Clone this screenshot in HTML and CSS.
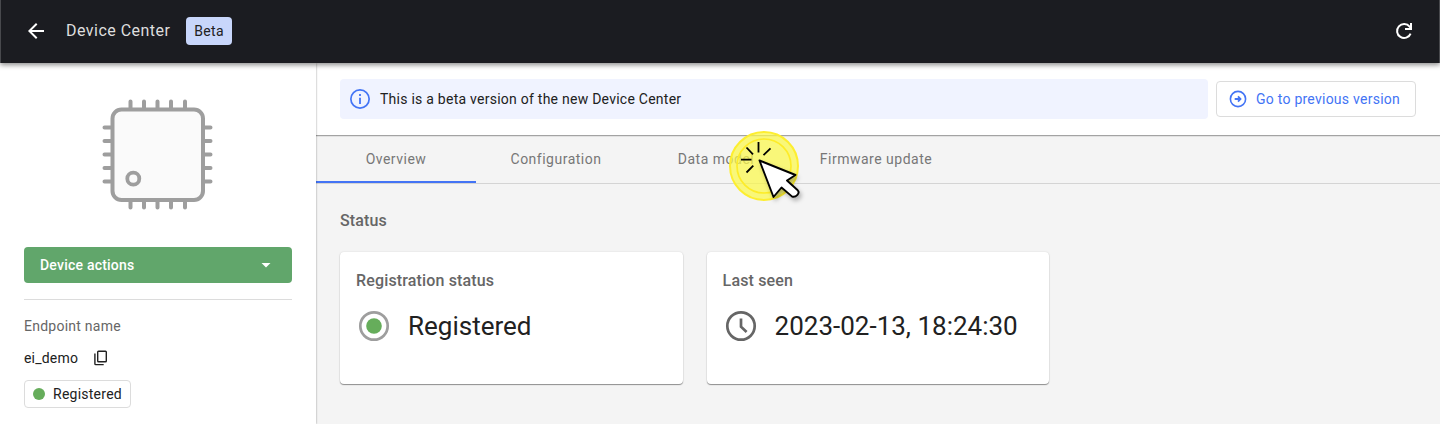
FILE: index.html
```html
<!DOCTYPE html>
<html lang="en">
<head>
<meta charset="utf-8">
<title>Device Center</title>
<link rel="stylesheet" href="styles.css">
</head>
<body>
<header class="topbar">
  <svg class="icon" width="24" height="24" viewBox="0 0 24 24"><path fill="#fff" d="M20 11H7.83l5.59-5.59L12 4l-8 8 8 8 1.41-1.41L7.83 13H20z"/></svg>
  <h1 class="title">Device Center</h1>
  <span class="beta">Beta</span>
  <svg class="icon refresh" width="24" height="24" viewBox="0 0 24 24"><path d="M18.6 14.6A7 7 0 1 1 17.6 7.7L19 9.3" fill="none" stroke="#fff" stroke-width="2"/><path d="M19 4v6h-6" fill="none" stroke="#fff" stroke-width="2"/></svg>
</header>
<div class="layout">
  <aside class="sidebar">
    <svg class="chip" width="112" height="112" viewBox="0 0 112 112" fill="none" stroke="#9e9e9e">
      <g stroke-width="4" stroke-linecap="round">
        <path d="M28.500 3.500v106M42 3.500v106M55.500 3.500v106M69 3.500v106M83 3.500v106"/>
        <path d="M2.500 29.500h106M2.500 43h106M2.500 56.500h106M2.500 70h106M2.500 83.500h106"/>
      </g>
      <rect x="10.500" y="11.500" width="90.500" height="90.500" rx="9" fill="#fafafa" stroke-width="4"/>
      <circle cx="31.300" cy="80.700" r="6" stroke-width="3.800"/>
    </svg>
    <button class="actions"><span>Device actions</span><svg width="24" height="24" viewBox="0 0 24 24"><path fill="#fff" d="M7.500 10l4.500 4.500 4.500-4.500z"/></svg></button>
    <div class="label">Endpoint name</div>
    <div class="endpoint"><span>ei_demo</span><svg width="16" height="16" viewBox="0 0 16 16" fill="none" stroke="#212121" stroke-width="1.400"><rect x="4.700" y="1.200" width="8.600" height="10.600" rx=".8"/><path d="M1.900 3.500v10.300q0 .8.800.8h8"/></svg></div>
    <div class="chip-status"><i class="dot"></i><span>Registered</span></div>
  </aside>
  <main class="main">
    <div class="notice-row">
      <div class="notice">
        <svg width="20" height="20" viewBox="0 0 20 20"><circle cx="10" cy="10" r="9.150" fill="none" stroke="#4374f5" stroke-width="1.700"/><path d="M9.100 5h1.800v2H9.100zM9.100 8.800h1.800V15H9.100z" fill="#4374f5"/></svg>
        <span>This is a beta version of the new Device Center</span>
      </div>
      <button class="previous"><svg width="18" height="18" viewBox="0 0 18 18" fill="none" stroke="#4374f5"><circle cx="9" cy="9" r="7.600" stroke-width="1.600"/><path d="M5.700 9H11.300M9 6.400L11.500 9 9 11.600" stroke-width="1.800"/></svg><span>Go to previous version</span></button>
    </div>
    <nav class="tabs">
      <a class="tab active">Overview</a>
      <a class="tab">Configuration</a>
      <a class="tab">Data model</a>
      <a class="tab">Firmware update</a>
    </nav>
    <section class="content">
      <h2 class="heading">Status</h2>
      <div class="cards">
        <article class="card">
          <h3 class="heading">Registration status</h3>
          <div class="value"><svg width="36" height="36" viewBox="0 0 36 36"><circle cx="18" cy="18" r="13.700" fill="none" stroke="#9e9e9e" stroke-width="2.700"/><circle cx="18" cy="18" r="7.800" fill="#66ad5b"/></svg><span>Registered</span></div>
        </article>
        <article class="card">
          <h3 class="heading">Last seen</h3>
          <div class="value"><svg width="36" height="36" viewBox="0 0 36 36" fill="none" stroke="#666"><circle cx="18" cy="18" r="13.700" stroke-width="2.700"/><path d="M18 10.500v8.200l5.600 5.300" stroke-width="2.700"/></svg><span>2023-02-13, 18:24:30</span></div>
        </article>
      </div>
    </section>
  </main>
</div>
<svg class="cursor" width="88" height="88" viewBox="0 0 88 88">
  <circle cx="44" cy="44" r="34" fill="#fbf84a" fill-opacity=".72" stroke="#fdee30" stroke-width="2"/>
  <circle cx="44" cy="44" r="27" fill="none" stroke="#fdec28" stroke-width="1.700"/>
  <path d="M38.500 20v10.500M26.500 25.500l6.500 6.800M50.500 26.300l-7 6.800M21 37.700h10.500M26.500 50.500l6.800-6.800" fill="none" stroke="#000" stroke-width="1.800"/>
  <path class="pointer" d="M39.500 38.500L75.500 53l-8.500 5.500 10.700 9.800q2 2-.3 4.500t-5.200 1.800L61.500 65.500l-8 9.500z" fill="#fff" stroke="#000" stroke-width="1.900" stroke-linejoin="round"/>
</svg>
</body>
</html>
```

FILE: styles.css
```css
* { box-sizing: border-box; }
body { margin: 0; height: 424px; overflow: hidden; background: #f4f4f4; color: #212121; font: 14px/20px Roboto, sans-serif; display: flex; flex-direction: column; }
h1, h2, h3 { margin: 0; }
svg { display: block; flex: none; }
span, .label { white-space: nowrap; }
button { font: inherit; margin: 0; }
.topbar { position: relative; z-index: 2; flex: none; height: 63px; padding: 0 23px 1px; display: flex; align-items: center; background: #1b1c21; border-left: 1px solid #48494d; border-right: 1px solid #48494d; box-shadow: 0 2px 5px rgba(0,0,0,.45); }
.title { margin-left: 18px; width: 104px; font-size: 16px; font-weight: 400; letter-spacing: .47px; color: #dedede; white-space: nowrap; }
.beta { margin-left: 16px; width: 46px; height: 28px; border-radius: 4px; background: #c8d6fb; line-height: 28px; text-align: center; letter-spacing: .35px; }
.refresh { margin-left: auto; }
.layout { flex: 1; display: flex; min-height: 0; }
.sidebar { width: 316px; flex: none; padding: 35px 24px 0; background: #fff; box-shadow: 0 0 2px rgba(0,0,0,.4); z-index: 1; }
.chip { margin: 0 0 0 78px; }
.actions { margin-top: 37px; width: 268px; height: 36px; padding: 0 14px 0 16px; display: flex; align-items: center; justify-content: space-between; border: 0; border-radius: 4px; background: #61a66b; color: #fff; font-weight: 500; letter-spacing: .22px; }
.label { margin-top: 16px; padding-top: 16px; border-top: 1px solid #dcdcdc; color: #666; letter-spacing: .25px; }
.endpoint { display: flex; align-items: center; margin-top: 12px; letter-spacing: .2px; gap: 14.400px; }
.chip-status { margin-top: 12px; width: 107px; height: 28px; padding-left: 8px; display: flex; align-items: center; gap: 8px; border: 1px solid #dcdcdc; border-radius: 4px; letter-spacing: .25px; }
.dot { width: 12px; height: 12px; border-radius: 50%; background: #66ad5b; }
.main { flex: 1; min-width: 0; }
.notice-row { height: 72px; padding: 16px 24px; display: flex; gap: 8px; background: #fff; box-shadow: 0 1px #a3a3a3, 0 2px #e2e2e2; position: relative; }
.notice { flex: 1; height: 40px; padding-left: 10px; display: flex; align-items: center; gap: 10px; border-radius: 4px; background: #f0f3ff; letter-spacing: .25px; }
.previous { margin-top: 2px; width: 200px; height: 36px; padding: 0 0 0 12px; display: flex; align-items: center; gap: 9px; border: 1px solid #dcdcdc; border-radius: 4px; background: #fff; color: #4374f5; letter-spacing: .25px; }
.tabs { display: flex; height: 49px; border-bottom: 1px solid #d4d4d4; }
.tab { width: 160px; height: 48px; text-align: center; line-height: 48px; color: #777; letter-spacing: .5px; }
.active { box-shadow: inset 0 -2px #4374f5; }
.content { padding: 26.500px 24px; }
.heading { font-size: 16px; font-weight: 500; line-height: 20px; color: #666; letter-spacing: .15px; }
.cards { margin-top: 21.500px; display: flex; gap: 24px; }
.card { width: 342.600px; height: 132px; padding: 18.500px 16px; border-radius: 4px; background: #fff; box-shadow: 0 1px 1px rgba(0,0,0,.4), 0 0 2px rgba(0,0,0,.12); }
.value { margin-top: 17.500px; display: flex; align-items: center; gap: 16px; font-size: 26px; line-height: 36px; }
.cursor { position: absolute; z-index: 3; left: 720px; top: 122px; }
.pointer { filter: drop-shadow(2px 3px 2px rgba(0,0,0,.28)); }
```
